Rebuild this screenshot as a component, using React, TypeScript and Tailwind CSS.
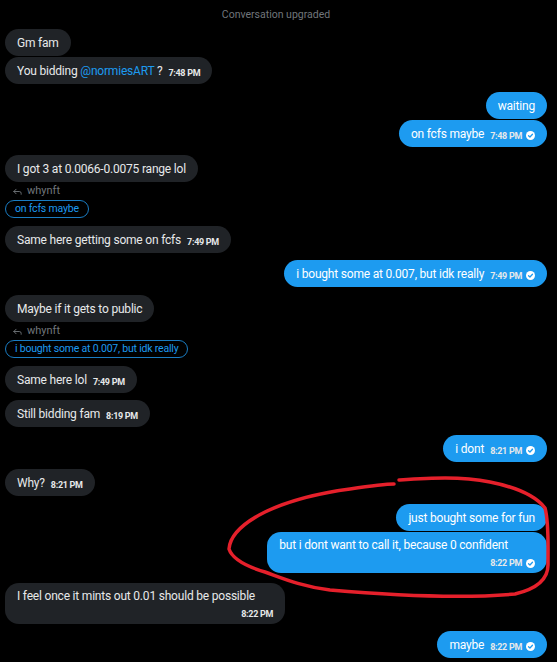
import { Reply } from 'lucide-react'

type Side = 'left' | 'right'

interface Msg {
  kind: 'bubble' | 'reply'
  side?: Side
  text?: string
  mention?: string
  after?: string
  time?: string
  tall?: boolean
  pad?: string
  quote?: string
  mt: string
}

const messages: Msg[] = [
  { kind: 'bubble', side: 'left', text: 'Gm fam', mt: 'mt-0' },
  { kind: 'bubble', side: 'left', text: 'You bidding ', mention: '@normiesART', after: ' ?', time: '7:48 PM', mt: 'mt-[1px]' },
  { kind: 'bubble', side: 'right', text: 'waiting', mt: 'mt-[8px]' },
  { kind: 'bubble', side: 'right', text: 'on fcfs maybe', time: '7:48 PM', mt: 'mt-[1px]' },
  { kind: 'bubble', side: 'left', text: 'I got 3 at 0.0066-0.0075 range lol', mt: 'mt-[8px]' },
  { kind: 'reply', quote: 'on fcfs maybe', mt: 'mt-[1px]' },
  { kind: 'bubble', side: 'left', text: 'Same here getting some on fcfs', time: '7:49 PM', mt: 'mt-[8px]' },
  { kind: 'bubble', side: 'right', text: 'i bought some at 0.007, but idk really', time: '7:49 PM', mt: 'mt-[7px]' },
  { kind: 'bubble', side: 'left', text: 'Maybe if it gets to public', mt: 'mt-[8px]' },
  { kind: 'reply', quote: 'i bought some at 0.007, but idk really', mt: 'mt-[1px]' },
  { kind: 'bubble', side: 'left', text: 'Same here lol', time: '7:49 PM', mt: 'mt-[8px]' },
  { kind: 'bubble', side: 'left', text: 'Still bidding fam', time: '8:19 PM', mt: 'mt-[7px]' },
  { kind: 'bubble', side: 'right', text: 'i dont', time: '8:21 PM', mt: 'mt-[8px]' },
  { kind: 'bubble', side: 'left', text: 'Why?', time: '8:21 PM', mt: 'mt-[7px]' },
  { kind: 'bubble', side: 'right', text: 'just bought some for fun', mt: 'mt-[8px]' },
  { kind: 'bubble', side: 'right', text: 'but i dont want to call it, because 0 confident', time: '8:22 PM', tall: true, pad: 'pr-[27px]', mt: 'mt-[1px]' },
  { kind: 'bubble', side: 'left', text: 'I feel once it mints out 0.01 should be possible', time: '8:22 PM', tall: true, pad: 'pr-[18px]', mt: 'mt-[10px]' },
  { kind: 'bubble', side: 'right', text: 'maybe', time: '8:22 PM', mt: 'mt-[7px]' },
]

function SentCheck() {
  return (
    <svg width="9" height="9" viewBox="0 0 10 10" className="shrink-0">
      <circle cx="5" cy="5" r="5" fill="#ffffff" />
      <path d="M2.8 5.2 L4.4 6.7 L7.2 3.6" fill="none" stroke="#1d9bf0" strokeWidth="1.4" strokeLinecap="round" strokeLinejoin="round" />
    </svg>
  )
}

function Stamp({ time, side }: { time: string; side: Side }) {
  return (
    <span className="flex items-center gap-[4px] shrink-0">
      <span className="text-[9px] leading-[12px] font-bold tracking-[-0.3px] text-[#e7e9ea] whitespace-nowrap">{time}</span>
      {side === 'right' && <SentCheck />}
    </span>
  )
}

function Bubble({ m }: { m: Msg }) {
  const side = m.side ?? 'left'
  const color = side === 'right' ? 'bg-[#1d9bf0] text-white' : 'bg-[#202327] text-[#e7e9ea]'
  const body = (
    <span className="whitespace-nowrap">
      {m.text}
      {m.mention && <span className="text-[#1d9bf0]">{m.mention}</span>}
      {m.after}
    </span>
  )

  if (m.tall) {
    return (
      <div className={`flex flex-col rounded-[14px] pl-3 pr-[12px] pt-[5px] pb-[4px] ${color}`}>
        <div className={`text-[12px] leading-[16px] tracking-[-0.2px] ${m.pad ?? ''}`}>{body}</div>
        <div className="flex justify-end mt-[4px]">{m.time && <Stamp time={m.time} side={side} />}</div>
      </div>
    )
  }

  return (
    <div className={`flex items-center gap-[6px] h-[27px] rounded-full px-3 ${color}`}>
      <span className="text-[12px] leading-[16px] tracking-[-0.2px]">{body}</span>
      {m.time && (
        <span className="mt-[4px]">
          <Stamp time={m.time} side={side} />
        </span>
      )}
    </div>
  )
}

function ReplyQuote({ quote }: { quote: string }) {
  return (
    <div className="flex flex-col items-start">
      <div className="flex items-center gap-[4px] h-[16px] pl-[7px] text-[#71767b]">
        <Reply size={11} strokeWidth={2} />
        <span className="text-[11px] leading-[14px]">whynft</span>
      </div>
      <div className="mt-[1px] h-[18px] flex items-center rounded-full border border-[#1a7cc2] px-[9px] text-[10.5px] tracking-[-0.2px] text-[#1d9bf0] whitespace-nowrap">
        {quote}
      </div>
    </div>
  )
}

function RedLoop() {
  return (
    <svg className="absolute inset-0 pointer-events-none" width="557" height="662" viewBox="0 0 557 662">
      <path
        d="M399 480 C430 478 460 476 490 482 C515 487 535 495 545 508 C549 522 548 545 548 565 C548 580 536 589 515 594 C470 598 400 596 330 590 C300 586 282 578 265 572 C245 566 232 558 229 549 C230 535 245 522 265 512 C290 500 320 493 350 489 C370 486 385 484 394 484"
        fill="none"
        stroke="#e5202b"
        strokeWidth="3.5"
        strokeLinecap="round"
        strokeLinejoin="round"
      />
    </svg>
  )
}

export default function App() {
  return (
    <div
      className="relative w-[557px] h-[662px] overflow-hidden bg-black"
      style={{ fontFamily: 'Roboto, "Liberation Sans", sans-serif' }}
    >
      <div className="flex flex-col pl-[5px] pr-[10px]">
        {/* System notice */}
        <div className="h-[29px] flex items-center justify-center text-[10.5px] text-[#71767b]">
          Conversation upgraded
        </div>

        {messages.map((m, i) => (
          <div
            key={i}
            className={`flex ${m.mt} ${m.side === 'right' ? 'justify-end' : 'justify-start'}`}
          >
            {m.kind === 'reply' ? <ReplyQuote quote={m.quote!} /> : <Bubble m={m} />}
          </div>
        ))}
      </div>

      <RedLoop />
    </div>
  )
}
